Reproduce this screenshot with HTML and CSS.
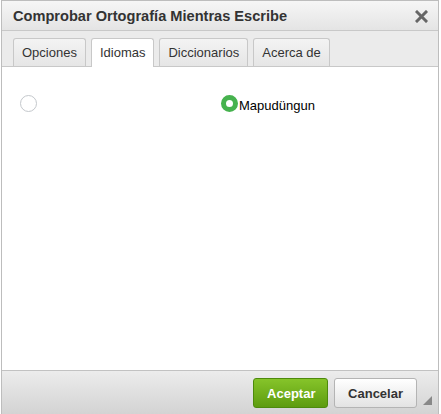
FILE: index.html
```html
<!DOCTYPE html>
<html lang="es">
<head>
    <meta charset="UTF-8">
    <title>Comprobar Ortografía Mientras Escribe</title>
    <link rel="stylesheet" href="styles.css">
</head>
<body>
    <div class="dialogo">
        <div class="titulo">
            <span>Comprobar Ortografía Mientras Escribe</span>
            <svg class="cerrar" width="13" height="13" viewBox="0 0 13 13">
                <path d="M2 2 L11 11 M11 2 L2 11" stroke="#666" stroke-width="3" stroke-linecap="square"/>
            </svg>
        </div>
        <div class="pestanas">
            <div class="pestana">Opciones</div>
            <div class="pestana activa">Idiomas</div>
            <div class="pestana">Diccionarios</div>
            <div class="pestana">Acerca de</div>
        </div>
        <div class="contenido">
            <div class="idiomas">
                <label class="opcion"><span class="radio"></span></label>
                <label class="opcion"><span class="radio marcado"></span>Mapudüngun</label>
            </div>
        </div>
        <div class="pie">
            <button class="boton aceptar">Aceptar</button>
            <button class="boton">Cancelar</button>
            <span class="agarre"></span>
        </div>
    </div>
</body>
</html>
```

FILE: styles.css
```css
body {
    margin: 0;
    background: #fff;
    font-family: Arial, "Liberation Sans", sans-serif;
}

.dialogo {
    margin-left: 1px;
    width: 438px;
    height: 414px;
    box-sizing: border-box;
    border: 1px solid #bdbdbd;
    border-bottom: none;
    display: flex;
    flex-direction: column;
}

.titulo {
    height: 30px;
    box-sizing: border-box;
    border-bottom: 1px solid #c8c8c8;
    background: linear-gradient(#f6f6f6, #e4e4e4);
    padding: 0 10px 0 11px;
    display: flex;
    align-items: center;
    justify-content: space-between;
    font-weight: bold;
    font-size: 14.6px;
    color: #333;
}

.cerrar {
    margin-top: 1px;
}

.pestanas {
    height: 36px;
    box-sizing: border-box;
    background: #ebebeb;
    border-bottom: 1px solid #c8c8c8;
    padding: 7px 0 0 11px;
    display: flex;
    gap: 5px;
    align-items: flex-end;
}

.pestana {
    height: 28px;
    box-sizing: border-box;
    padding: 0 8px;
    border: 1px solid #c8c8c8;
    border-bottom: none;
    border-radius: 3px 3px 0 0;
    background: linear-gradient(#f3f3f3, #e6e6e6);
    font-size: 13px;
    line-height: 27px;
    color: #333;
}

.pestana.activa {
    background: #fff;
    height: 29px;
    margin-bottom: -1px;
}

.contenido {
    flex: 1;
    background: #fff;
}

.idiomas {
    display: grid;
    grid-template-columns: 201px 200px;
    padding: 28px 0 0 18px;
}

.opcion {
    display: flex;
    align-items: flex-end;
    font-size: 13px;
    line-height: 13px;
    color: #000;
}

.radio {
    width: 17px;
    height: 17px;
    box-sizing: border-box;
    border: 1px solid #c4c8cc;
    border-radius: 50%;
    background: #fff;
}

.radio.marcado {
    border: 5px solid #46b24e;
    margin-right: 1px;
}

.pie {
    height: 44px;
    box-sizing: border-box;
    border-top: 1px solid #c2c2c2;
    background: linear-gradient(#ececec, #d3d3d3);
    display: flex;
    justify-content: flex-end;
    align-items: flex-start;
    gap: 6px;
    padding: 7px 21px 0 0;
    position: relative;
}

.boton {
    height: 30px;
    padding: 0 13px;
    border: 1px solid #b4b4b4;
    border-radius: 3px;
    background: linear-gradient(#ffffff, #e3e3e3);
    font-family: Arial, "Liberation Sans", sans-serif;
    font-weight: bold;
    font-size: 13px;
    color: #333;
}

.boton.aceptar {
    width: 75px;
    border-color: #4d8a0c;
    background: linear-gradient(#86c42a, #5d9c0f);
    color: #fff;
}

.agarre {
    position: absolute;
    right: 6px;
    bottom: 9px;
    width: 0;
    height: 0;
    border-left: 9px solid transparent;
    border-bottom: 9px solid #888;
}
```
